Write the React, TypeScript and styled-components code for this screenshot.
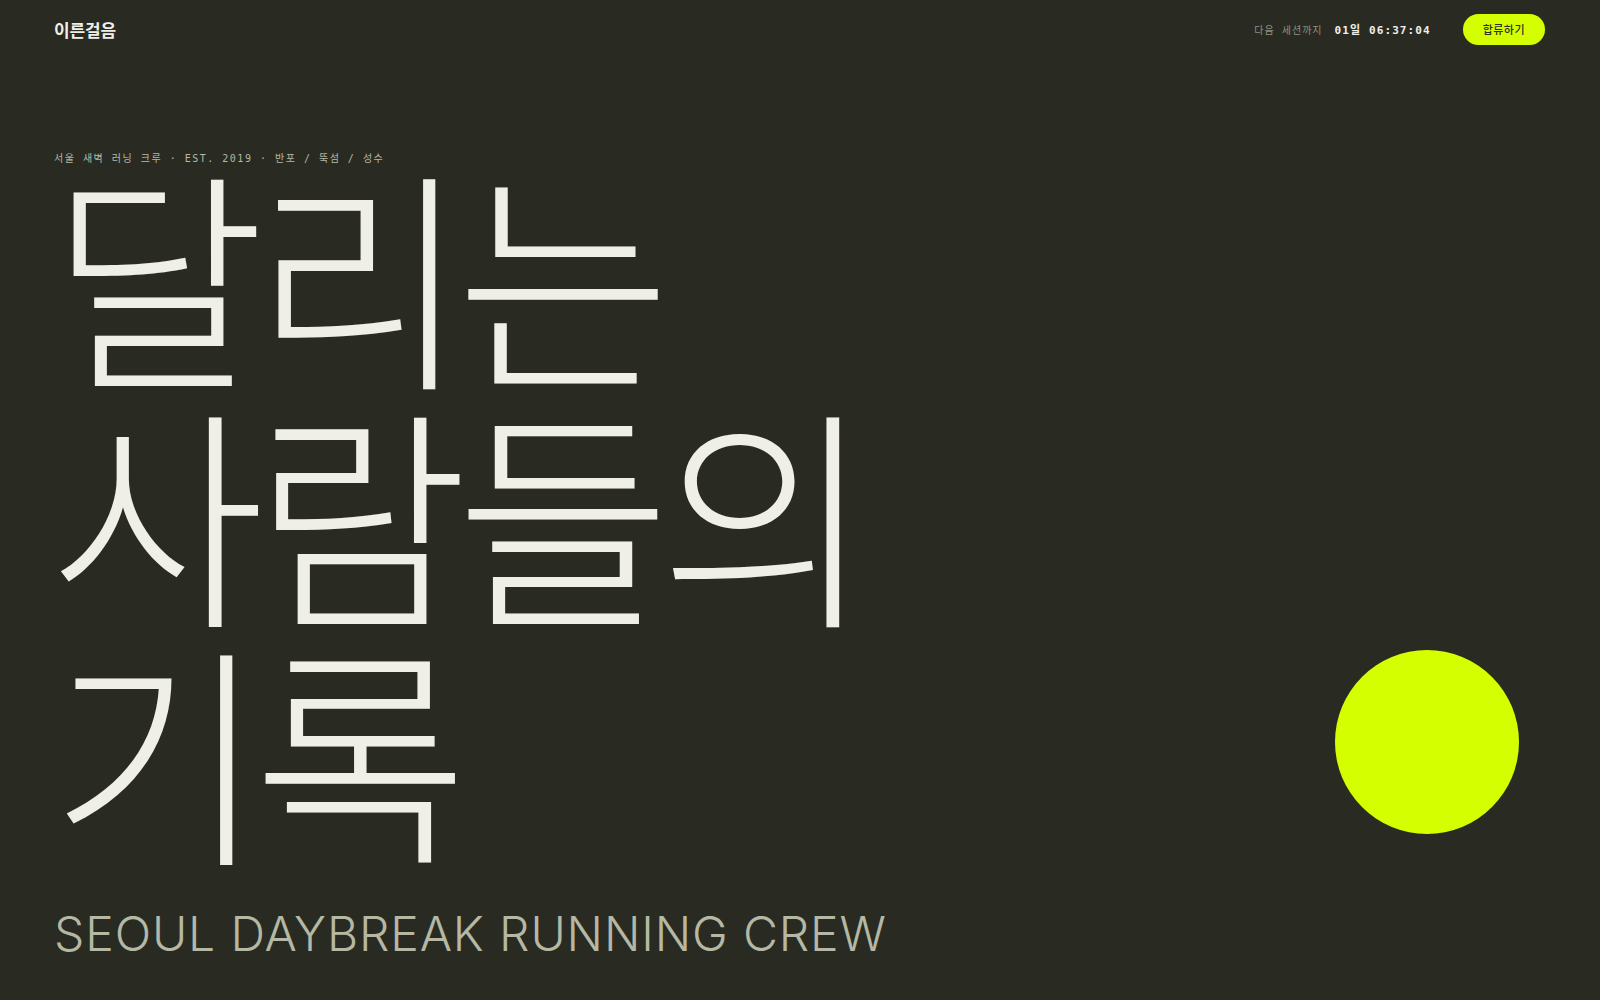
import React from 'react';
import styled, { createGlobalStyle } from 'styled-components';

const GlobalStyle = createGlobalStyle`
  * {
    box-sizing: border-box;
  }
  html,
  body {
    margin: 0;
    padding: 0;
    background: #292b22;
  }
  body {
    font-family: 'Noto Sans CJK KR', 'Noto Sans', sans-serif;
    color: #f0efe7;
  }
`;

const MONO = `'DejaVu Sans Mono', 'Noto Sans CJK KR', monospace`;

const App = () => {
  return (
    <>
      <GlobalStyle />
      <Page>
        <Header>
          <Logo>이른걸음</Logo>
          <HeaderRight>
            <Countdown>
              <CountLabel>다음 세션까지</CountLabel>
              <CountValue>01일 06:37:04</CountValue>
            </Countdown>
            <JoinButton>합류하기</JoinButton>
          </HeaderRight>
        </Header>
        <Hero>
          <HeroText>
            <Eyebrow>서울 새벽 러닝 크루 · EST. 2019 · 반포 / 뚝섬 / 성수</Eyebrow>
            <Title>
              <TitleLine>달리는</TitleLine>
              <TitleLine>사람들의</TitleLine>
              <TitleLine>기록</TitleLine>
            </Title>
            <Subtitle>SEOUL DAYBREAK RUNNING CREW</Subtitle>
          </HeroText>
          <Sun aria-hidden />
        </Hero>
      </Page>
    </>
  );
};

export default App;

const Page = styled.div`
  min-height: 100vh;
  display: flex;
  flex-direction: column;
  padding: 0 55px 0 54px;
`;

const Header = styled.header`
  height: 58px;
  display: flex;
  align-items: center;
  justify-content: space-between;
`;

const Logo = styled.div`
  font-size: 17px;
  font-weight: 700;
  color: #f0efe7;
  letter-spacing: -0.01em;
`;

const HeaderRight = styled.div`
  display: flex;
  align-items: center;
  gap: 32px;
`;

const Countdown = styled.div`
  display: flex;
  align-items: baseline;
  gap: 12px;
  font-family: ${MONO};
`;

const CountLabel = styled.span`
  font-size: 10px;
  letter-spacing: 0.1em;
  color: #8f9183;
`;

const CountValue = styled.span`
  font-size: 11px;
  font-weight: 700;
  letter-spacing: 0.1em;
  color: #f0efe7;
`;

const JoinButton = styled.button`
  height: 31px;
  padding: 0 20px;
  border: none;
  border-radius: 999px;
  background: #d4ff00;
  color: #2e3221;
  font-family: 'Noto Sans CJK KR', sans-serif;
  font-size: 11px;
  font-weight: 500;
  letter-spacing: 0.04em;
  cursor: pointer;
`;

const Hero = styled.main`
  flex: 1;
  display: flex;
  justify-content: space-between;
  align-items: flex-end;
  padding-bottom: 40px;
`;

const HeroText = styled.div`
  align-self: flex-start;
  display: flex;
  flex-direction: column;
  padding-top: 92px;
`;

const Eyebrow = styled.p`
  margin: 0;
  font-family: ${MONO};
  font-size: 10px;
  letter-spacing: 0.15em;
  color: #b6b7a6;
`;

const Title = styled.h1`
  margin: -14px 0 0 -4px;
  display: flex;
  flex-direction: column;
  font-family: 'Noto Sans CJK KR', sans-serif;
  font-size: 234px;
  font-weight: 300;
  line-height: 238px;
  letter-spacing: -0.053em;
  color: #f0efe7;
`;

const TitleLine = styled.span`
  display: block;
  white-space: nowrap;
`;

const Subtitle = styled.p`
  margin: 45px 0 0;
  font-family: Inter, 'Liberation Sans', sans-serif;
  font-size: 48px;
  font-weight: 300;
  letter-spacing: 0.018em;
  line-height: 1;
  color: #b5b8a4;
`;

const Sun = styled.div`
  width: 184px;
  height: 184px;
  border-radius: 50%;
  background: #d4ff00;
  margin: 0 26px 126px 0;
  flex-shrink: 0;
`;
